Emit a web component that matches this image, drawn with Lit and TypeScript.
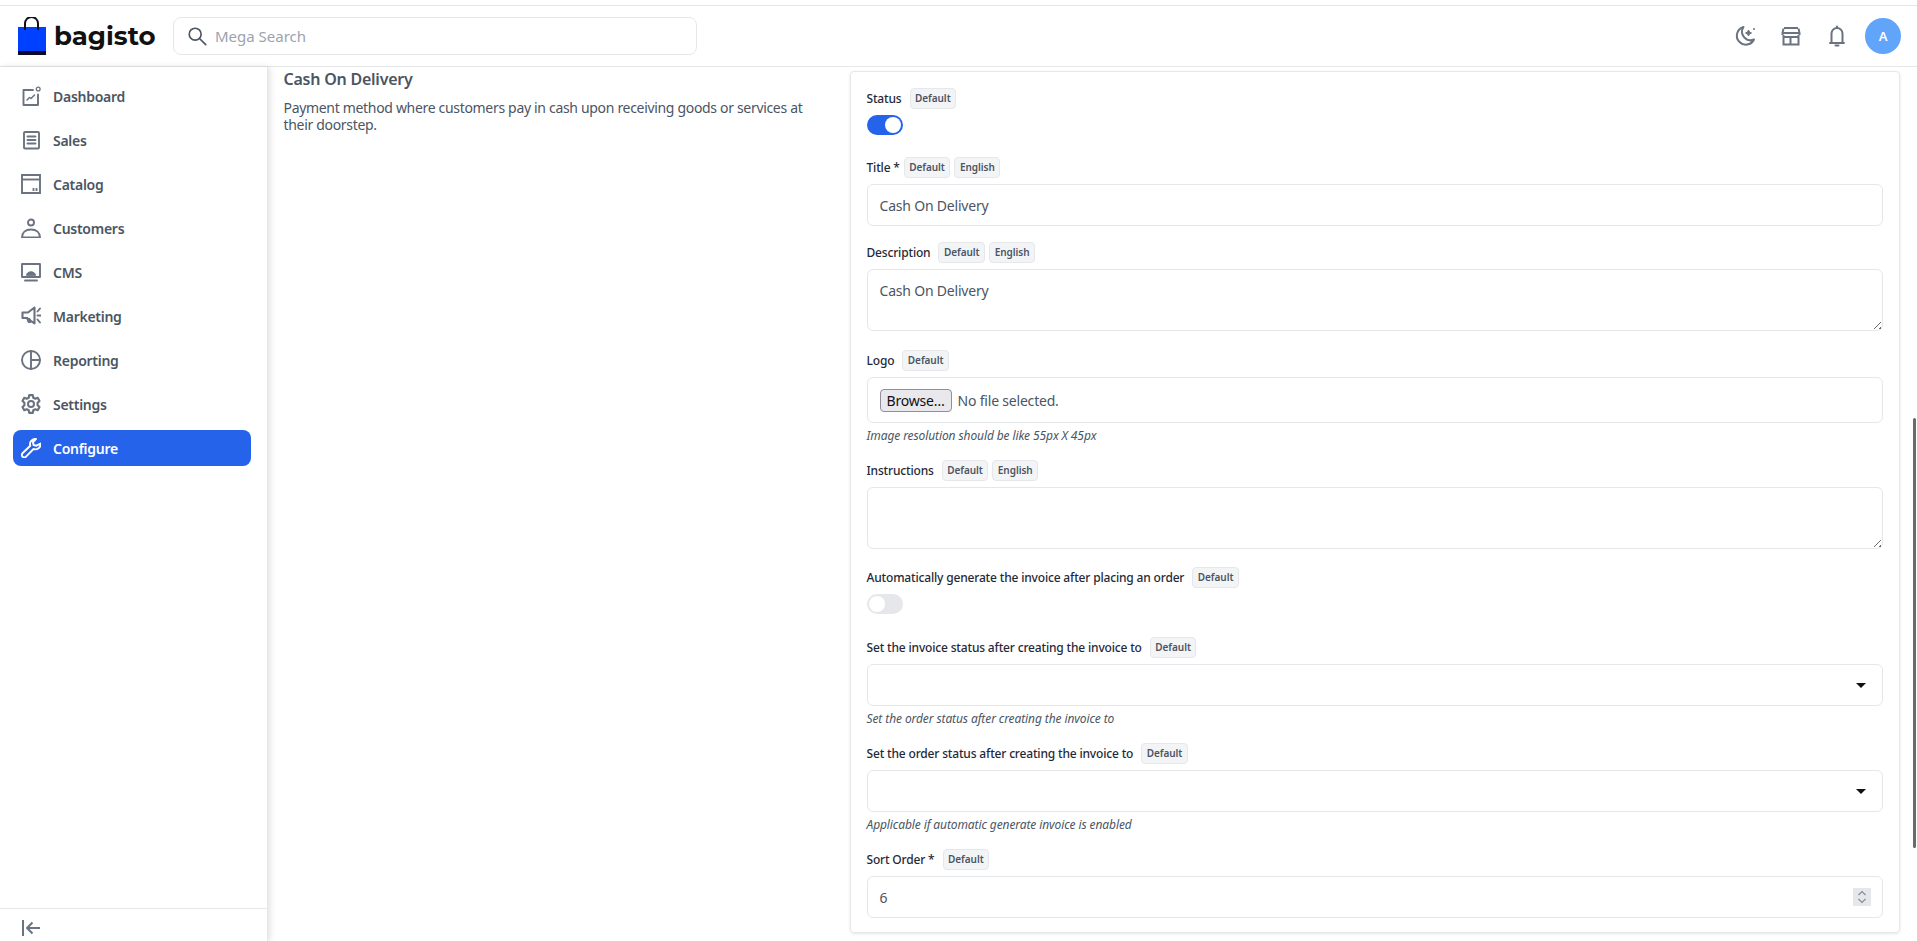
import { LitElement, html, css, svg } from "lit";
import { customElement } from "lit/decorators.js";

const ic = (p: any) => html`<svg class="ic" viewBox="0 0 20 20" fill="none" stroke="currentColor" stroke-width="1.900" stroke-linecap="round" stroke-linejoin="round">${p}</svg>`;
const nav: [string, any][] = [
  ["Dashboard", svg`<path d="M12 4H2.500v15H17V8.500"/><path d="M6 14l2.500-2.500 1.500 1 3.500-3.500" stroke-width="1.500"/><circle cx="17.200" cy="3" r="1.900" stroke-width="1.300"/>`],
  ["Sales", svg`<rect x="3" y="2" width="15" height="16.500" rx="1"/><path d="M6.500 6.500h8M6.500 10h8M6.500 13.500h8"/>`],
  ["Catalog", svg`<path d="M1 1h18v18H1z" stroke-linejoin="miter"/><path d="M1 5.500h18" stroke-linecap="butt"/><path d="M12.500 17v-3M15.500 17v-3" stroke-linecap="butt" stroke-width="1.800"/>`],
  ["Customers", svg`<circle cx="10" cy="4.500" r="3"/><path d="M1 19.500c0-5 3.500-8 9-8s9 3 9 8z"/>`],
  ["CMS", svg`<path d="M1 2h18v13H1zM4 18.500h12"/><path d="M5.500 13c.5-2 2-3.200 4.500-3.200s4 1.200 4.500 3.200z" fill="currentColor" stroke-width="1"/>`],
  ["Marketing", svg`<path d="M13.500 1.500L7 6.500H1.500v5.500H6l7.500 5.500z" stroke-width="2.100"/><path d="M6 12l1.500 4h2l-1-3M16.500 9.500h3.500M16.500 5.500l2.500-3M16.500 13.500l2.500 3"/>`],
  ["Reporting", svg`<circle cx="10" cy="10" r="9"/><path d="M10 1v18M10 10h9"/>`],
  ["Settings", svg`<circle cx="10" cy="10" r="3" stroke-width="2"/><path stroke-width="2.200" d="M8.200 1.200h3.600l.5 2.500 2 1 2.400-.9 1.800 3.200-1.900 1.700v2.600l1.900 1.700-1.800 3.200-2.400-.9-2 1-.5 2.500H8.200l-.5-2.500-2-1-2.400.9-1.800-3.200 1.900-1.700V8.700L1.500 7l1.800-3.200 2.400.9 2-1z"/>`],
  ["Configure", svg`<path d="M19.500 5.500a5.200 5.200 0 0 1-7 5.500L5 18.600a2.300 2.300 0 0 1-3.500-3.300l7.800-7.500A5.200 5.200 0 0 1 15 1l-3 3 .5 3 3 .7z"/>`],
];

@customElement("app-root")
export class AppRoot extends LitElement {
  static styles = css`
    :host { display: block; height: 941px; overflow: hidden; font-family: "Noto Sans", sans-serif; color: #4b5563; background: #fff; }
    .top { height: 60px; margin-top: 5px; border-top: 1px solid #e5e7eb; border-bottom: 1px solid #e5e7eb; display: flex; align-items: center; padding: 0 16px 0 18px; box-sizing: content-box; }
    .logo { display: flex; align-items: center; gap: 8px; width: 155px; flex: none; }
    .logo svg { width: 28px; height: 38px; }
    .logo b { font: 700 26px "Montserrat", "Inter", sans-serif; color: #111; }
    .search { width: 524px; height: 38px; box-sizing: border-box; border: 1px solid #e5e7eb; border-radius: 8px; display: flex; align-items: center; gap: 7px; padding: 0 12px; font-size: 15px; color: #9ca3af; }
    .search svg { width: 22px; height: 22px; color: #4b5563; }
    .spacer { flex: 1; }
    .acts { display: flex; align-items: center; gap: 20px; color: #6b7280; }
    .acts svg { width: 26px; height: 26px; }
    .av { width: 36px; height: 36px; margin-left: -5px; border-radius: 50%; background: #60a5fa; color: #fff; font-size: 13px; font-weight: 600; display: flex; align-items: center; justify-content: center; }
    .body { display: flex; height: 874px; }
    .side { width: 268px; flex: none; border-right: 1px solid #e5e7eb; box-shadow: 2px 0 6px rgba(0,0,0,.12); display: flex; flex-direction: column; padding-top: 11px; box-sizing: border-box; }
    .nav { flex: 1; display: flex; flex-direction: column; gap: 8px; padding: 0 16px 0 13px; }
    .item { height: 36px; display: flex; align-items: center; gap: 12px; padding: 0 8px; border-radius: 8px; font-size: 14px; font-weight: 600; letter-spacing: -.27px; color: #4b5563; box-sizing: border-box; }
    .item.on { background: #2563eb; color: #fff; }
    .item .ic { color: #6b7280; }
    .item.on .ic { color: #fff; }
    .ic { width: 20px; height: 20px; flex: none; }
    .foot { height: 33px; box-sizing: border-box; border-top: 1px solid #e5e7eb; display: flex; align-items: center; padding: 5px 0 0 22px; }
    .foot svg { width: 18px; height: 16px; }
    .main { flex: 1; display: flex; gap: 25px; padding: 0 17px 0 15.500px; min-width: 0; position: relative; }
    .l { width: 541px; flex: none; }
    .l h2 { font-size: 16px; font-weight: 600; letter-spacing: -.23px; margin: 0 0 8px; line-height: 24px; }
    .l p { font-size: 14px; letter-spacing: -.32px; line-height: 17px; margin: 0; }
    .card { flex: 1; align-self: flex-start; min-width: 0; height: 862px; margin-top: 4px; box-sizing: border-box; border: 1px solid #e5e7eb; border-radius: 4px; box-shadow: 0 1px 3px rgba(0,0,0,.1); padding: 16px; display: flex; flex-direction: column; }
    .lab { display: flex; align-items: center; gap: 8px; font-size: 12px; font-weight: 500; letter-spacing: -.17px; color: #1f2937; height: 21px; flex: none; }
    .lab.t { gap: 4px; }
    .tags { display: flex; gap: 4px; }
    .tag { font-size: 10px; font-weight: 600; letter-spacing: -.05px; color: #4b5563; background: #f3f4f6; border: 1px solid #e5e7eb; border-radius: 4px; padding: 0 4.500px; height: 21px; line-height: 19px; box-sizing: border-box; }
    .field { box-sizing: border-box; border: 1px solid #e5e7eb; border-radius: 6px; height: 42px; flex: none; font-size: 14px; letter-spacing: -.2px; color: #4b5563; padding: 0 12px; display: flex; align-items: center; position: relative; margin-top: 6px; }
    .ta { height: 62px; align-items: flex-start; padding-top: 11px; }
    .ta::after { content: ""; position: absolute; right: 1px; bottom: 1px; width: 11px; height: 11px; background: repeating-linear-gradient(135deg, transparent 0 2px, #6b6b6b 2px 3px, transparent 3px 4px); clip-path: polygon(100% 0, 100% 100%, 0 100%); }
    .sel::after { content: ""; position: absolute; right: 16px; top: 18px; border: 5px solid transparent; border-top: 5px solid #111; border-bottom: 0; }
    .hint { font-size: 12px; font-style: italic; letter-spacing: -.1px; color: #4b5563; line-height: 16px; margin-top: 5px; flex: none; }
    .sw { width: 36px; height: 20px; border-radius: 10px; background: #e5e7eb; position: relative; margin-top: 6px; flex: none; }
    .sw::after { content: ""; position: absolute; left: 2px; top: 2px; width: 16px; height: 16px; border-radius: 50%; background: #fff; }
    .sw.on { background: #2563eb; }
    .sw.on::after { left: 18px; }
    .g16 { margin-top: 16px; }
    .g18 { margin-top: 18px; }
    .g19 { margin-top: 19px; }
    .g22 { margin-top: 22px; }
    .g23 { margin-top: 23px; }
    .browse { color: #111; background: #e9e9ed; border: 1px solid #8f8f9d; border-radius: 4px; height: 23px; line-height: 21px; box-sizing: border-box; padding: 0 6px; margin-right: 6px; }
    .file { height: 46px; }
    .spin { position: absolute; right: 11px; top: 11px; width: 18px; height: 18px; background: #e5e7eb; }
    .spin svg { display: block; width: 18px; height: 18px; }
    .bar { position: absolute; right: 1px; top: 351px; width: 3.500px; height: 430px; background: #6b6b6b; border-radius: 2px; }
  `;
  render() {
    const tags = (...t: string[]) => html`<span class="tags">${t.map((x) => html`<span class="tag">${x}</span>`)}</span>`;
    return html`
      <div class="top">
        <div class="logo">
          <svg viewBox="0 0 28 38"><path d="M7 11V6.500a6.500 6.500 0 0 1 13 0V11" fill="none" stroke="#111" stroke-width="2"/><path d="M0 10h28v28H0z" fill="#0041ff"/><path d="M0 34h28v4H0z" fill="#0b0b2a"/><path d="M7 10v3M20 10v3" stroke="#111" stroke-width="2"/></svg>
          <b>bagisto</b>
        </div>
        <div class="search"><svg viewBox="0 0 24 24" fill="none" stroke="currentColor" stroke-width="1.800" stroke-linecap="round"><circle cx="10" cy="10" r="6.500"/><path d="M15 15l6.500 6.500"/></svg>Mega Search</div>
        <div class="spacer"></div>
        <div class="acts">
          <svg viewBox="0 0 26 26" fill="none" stroke="currentColor" stroke-width="2" stroke-linejoin="round"><path d="M11.500 4a9 9 0 1 0 10.500 12.500A8.500 8.500 0 0 1 11.500 4z"/><path d="M16.500 7l1 2 2 1-2 1-1 2-1-2-2-1 2-1z" fill="currentColor" stroke-width="1"/><circle cx="22" cy="6" r="1" fill="currentColor" stroke="none"/></svg>
          <svg viewBox="0 0 26 26" fill="none" stroke="currentColor" stroke-width="2" stroke-linejoin="miter"><path d="M6 5h14M4.500 10h17M5.500 5.500L4.500 10v2M20.500 5.500l1 4.500v2M5.500 12v9.500h15V12M5 14h16M12.500 14v7.500"/></svg>
          <svg viewBox="0 0 26 26" fill="none" stroke="currentColor" stroke-width="2" stroke-linejoin="round" stroke-linecap="round"><path d="M7.500 19v-8.500a5.500 5.500 0 0 1 11 0V19l1.500 1H6zM13 3.500V5"/><path d="M11.500 22.500h3"/></svg>
          <div class="av">A</div>
        </div>
      </div>
      <div class="body">
        <aside class="side">
          <nav class="nav">${nav.map(([n, p]) => html`<div class="item ${n === "Configure" ? "on" : ""}">${ic(p)}${n}</div>`)}</nav>
          <div class="foot"><svg viewBox="0 0 18 16" fill="none" stroke="#6b7280" stroke-width="2" stroke-linejoin="round"><path d="M1 0v16M18 8H5M10.500 2.500L5 8l5.500 5.500"/></svg></div>
        </aside>
        <main class="main">
          <div class="l">
            <h2>Cash On Delivery</h2>
            <p>Payment method where customers pay in cash upon receiving goods or services at their doorstep.</p>
          </div>
          <section class="card">
            <div class="lab">Status ${tags("Default")}</div>
            <div class="sw on"></div>
            <div class="lab t g22">Title * ${tags("Default", "English")}</div>
            <div class="field">Cash On Delivery</div>
            <div class="lab g16">Description ${tags("Default", "English")}</div>
            <div class="field ta">Cash On Delivery</div>
            <div class="lab g19">Logo ${tags("Default")}</div>
            <div class="field file"><span class="browse">Browse…</span>No file selected.</div>
            <div class="hint">Image resolution should be like 55px X 45px</div>
            <div class="lab g16">Instructions ${tags("Default", "English")}</div>
            <div class="field ta"></div>
            <div class="lab g18">Automatically generate the invoice after placing an order ${tags("Default")}</div>
            <div class="sw"></div>
            <div class="lab g23">Set the invoice status after creating the invoice to ${tags("Default")}</div>
            <div class="field sel"></div>
            <div class="hint">Set the order status after creating the invoice to</div>
            <div class="lab g16">Set the order status after creating the invoice to ${tags("Default")}</div>
            <div class="field sel"></div>
            <div class="hint">Applicable if automatic generate invoice is enabled</div>
            <div class="lab g16">Sort Order * ${tags("Default")}</div>
            <div class="field">6<span class="spin"><svg viewBox="0 0 18 18" fill="none" stroke="#8b8b95" stroke-width="1.200"><path d="M5.500 7L9 3.500 12.500 7M5.500 11L9 14.500 12.500 11"/></svg></span></div>
          </section>
          <div class="bar"></div>
        </main>
      </div>
    `;
  }
}
